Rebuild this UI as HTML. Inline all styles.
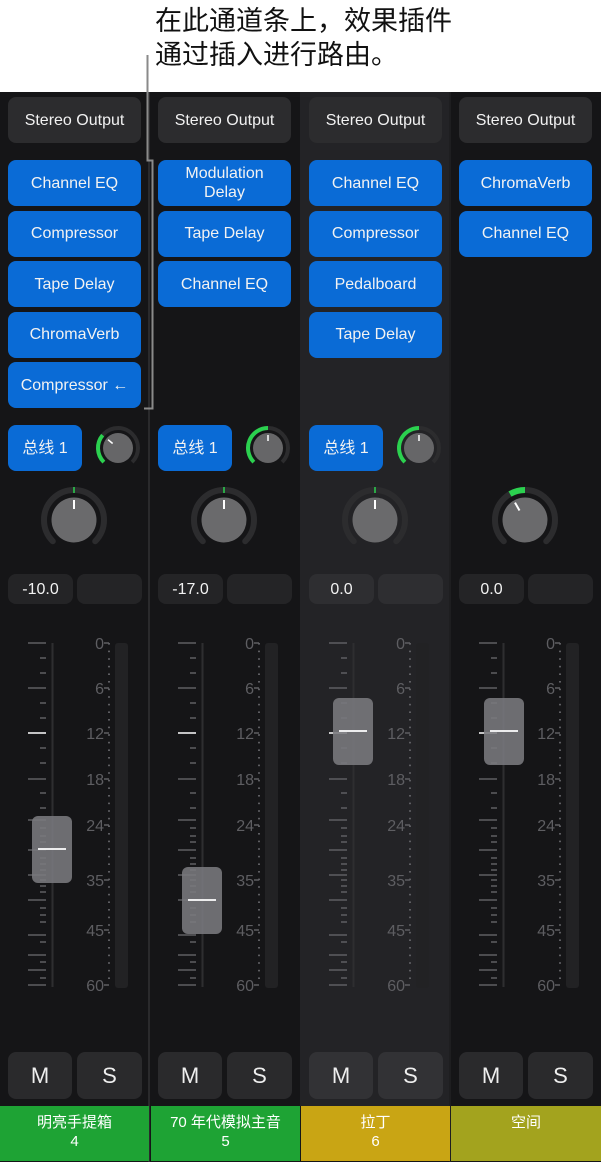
<!DOCTYPE html>
<html><head><meta charset="utf-8">
<style>
*{margin:0;padding:0;box-sizing:border-box}
body{width:601px;height:1162px;background:#fff;position:relative;overflow:hidden;font-family:"Liberation Sans","Noto Sans CJK SC",sans-serif}
.cap{position:absolute;left:155px;font-size:27px;color:#111;font-family:"Noto Sans CJK SC",sans-serif;line-height:33px;white-space:nowrap}
.panel{position:absolute;left:0;top:92px;width:601px;height:1070px;background:#151517}
.col{position:absolute;top:92px;height:1014px;width:150px}
.b{position:absolute;border-radius:8px;color:#f2f2f2;font-size:16px;display:flex;align-items:center;justify-content:center;text-align:center;line-height:19px}
.g{background:#2c2c2e}
.bl{background:#0a6bd6}
.foot{position:absolute;top:1106px;height:55px;color:#fff;font-size:15px;text-align:center;line-height:19px;padding-top:7px;font-family:"Liberation Sans","Noto Sans CJK SC",sans-serif}
.ms{font-size:22px;color:#eee}
.sep{position:absolute;width:2px;background:#2a2a2c}
</style></head><body>
<div class="cap" style="top:2px">在此通道条上，效果插件</div>
<div class="cap" style="top:36px">通过插入进行路由。</div>
<div class="panel"></div>
<div class="col" style="left:300px;width:150px;background:#232326"></div>
<div class="sep" style="left:148px;top:92px;height:1070px"></div>
<div class="sep" style="left:449px;top:92px;height:1070px;background:#1e1e20"></div>
<div id="root"></div>
<svg style="position:absolute;left:0;top:0" width="601" height="420">
<path d="M147.5 55V160.5H152.5V408.5H144" fill="none" stroke="#8a8a8a" stroke-width="2"/>
</svg>
<div class="foot" style="left:0;width:149px;background:#1ea334">明亮手提箱<br>4</div>
<div class="foot" style="left:151px;width:149px;background:#1ea334">70 年代模拟主音<br>5</div>
<div class="foot" style="left:301px;width:149px;background:#c9a514">拉丁<br>6</div>
<div class="foot" style="left:451px;width:150px;background:#a3a31e">空间</div>
<script>
var cols=[
 {x:0,pl:["Channel EQ","Compressor","Tape Delay","ChromaVerb","Compressor ←"],bus:1,sa:-50,val:"-10.0",fy:816,pan:0},
 {x:150,pl:["Modulation<br>Delay","Tape Delay","Channel EQ"],bus:1,sa:0,val:"-17.0",fy:867,pan:0},
 {x:301,pl:["Channel EQ","Compressor","Pedalboard","Tape Delay"],bus:1,sa:0,val:"0.0",fy:698,pan:0},
 {x:451,pl:["ChromaVerb","Channel EQ"],bus:0,val:"0.0",fy:698,pan:-30}
];
function pt(cx,cy,r,a){a=(a-90)*Math.PI/180;return [cx+r*Math.cos(a),cy+r*Math.sin(a)];}
function arc(cx,cy,r,a1,a2){var p=pt(cx,cy,r,a1),q=pt(cx,cy,r,a2);var l=(a2-a1)>180?1:0;return "M"+p[0].toFixed(2)+" "+p[1].toFixed(2)+"A"+r+" "+r+" 0 "+l+" 1 "+q[0].toFixed(2)+" "+q[1].toFixed(2);}
var h="";
var labs=[["0",643],["6",688],["12",733],["18",779],["24",825],["35",880],["45",930],["60",985]];
cols.forEach(function(c){
 var x=c.x;
 h+='<div class="b g" style="left:'+(x+8)+'px;top:97px;width:133px;height:46px">Stereo Output</div>';
 c.pl.forEach(function(p,i){h+='<div class="b bl" style="left:'+(x+8)+'px;top:'+(160+i*50.6)+'px;width:133px;height:46px;font-size:16px">'+p+'</div>';});
 var s='<svg style="position:absolute;left:'+x+'px;top:400px" width="150" height="600">';
 if(c.bus){
  h+='<div class="b bl" style="left:'+(x+8)+'px;top:425px;width:74px;height:46px;font-size:16px">总线 1</div>';
  var cx=118,cy=48;
  s+='<path d="'+arc(cx,cy,20,-135,135)+'" stroke="#2c2c2e" stroke-width="4" fill="none"/>';
  s+='<path d="'+arc(cx,cy,20,-135,c.sa)+'" stroke="#2bd14f" stroke-width="4" fill="none"/>';
  s+='<circle cx="'+cx+'" cy="'+cy+'" r="15" fill="#666668"/>';
  var a=pt(cx,cy,13,c.sa),b=pt(cx,cy,7,c.sa);
  s+='<line x1="'+a[0]+'" y1="'+a[1]+'" x2="'+b[0]+'" y2="'+b[1]+'" stroke="#fff" stroke-width="1.5"/>';
 }
 var kx=74,ky=120;
 s+='<path d="'+arc(kx,ky,30,-135,135)+'" stroke="#2c2c2e" stroke-width="6" fill="none" stroke-linecap="round"/>';
 if(c.pan<0) s+='<path d="'+arc(kx,ky,30,c.pan,0)+'" stroke="#2bd14f" stroke-width="6" fill="none"/>';
 else s+='<line x1="74" y1="87" x2="74" y2="93" stroke="#2bd14f" stroke-width="1.5"/>';
 s+='<circle cx="74" cy="120" r="22.5" fill="#6a6a6c"/>';
 var a=pt(kx,ky,20,c.pan),b=pt(kx,ky,11,c.pan);
 s+='<line x1="'+a[0]+'" y1="'+a[1]+'" x2="'+b[0]+'" y2="'+b[1]+'" stroke="#fff" stroke-width="2"/>';
 s+='<line x1="52.5" y1="243" x2="52.5" y2="587" stroke="#2e2e30" stroke-width="2"/>';
 s+='<rect x="115" y="243" width="13" height="345" rx="3" fill="#222224"/>';
 labs.forEach(function(l){
  s+='<text x="104" y="'+(l[1]-400+6)+'" fill="#5e5e62" font-size="16" text-anchor="end" font-family="Liberation Sans">'+l[0]+'</text>';
  s+='<line x1="104" y1="'+(l[1]-400)+'" x2="109" y2="'+(l[1]-400)+'" stroke="#5e5e62" stroke-width="1.5"/>';
 });
 for(var y=643;y<=985;y+=7.6){s+='<rect x="108" y="'+(y-400)+'" width="2" height="1.6" fill="#5e5e62"/>';}
 var maj=[643,688,733,779,820,850,875,900,935,955,970,985];
 maj.forEach(function(y){s+='<line x1="28" y1="'+(y-400)+'" x2="46" y2="'+(y-400)+'" stroke="'+(y==733?'#fff':'#5e5e62')+'" stroke-width="1.5"/>';});
 var mn=[658,673,703,718,748,763,793,808,828,836,842,858,864,870,880,886,892,908,915,922,942,962,978];
 mn.forEach(function(y){s+='<line x1="40" y1="'+(y-400)+'" x2="46" y2="'+(y-400)+'" stroke="#5e5e62" stroke-width="1.5"/>';});
 var fx=x==451?33:32;
 s+='<rect x="'+fx+'" y="'+(c.fy-400)+'" width="40" height="67" rx="6" fill="#7a7a7e" fill-opacity="0.88"/>';
 s+='<line x1="'+(fx+6)+'" y1="'+(c.fy-400+33)+'" x2="'+(fx+34)+'" y2="'+(c.fy-400+33)+'" stroke="#fff" stroke-width="1.8"/>';
 s+='</svg>';
 h+=s;
 h+='<div class="b g" style="left:'+(x+8)+'px;top:574px;width:65px;height:30px;font-size:16px;background:'+(x==301?'#2e2e31':'#242426')+'">'+c.val+'</div>';
 h+='<div class="b g" style="left:'+(x+77)+'px;top:574px;width:65px;height:30px;background:'+(x==301?'#2e2e31':'#242426')+'"></div>';
 h+='<div class="b g ms" style="left:'+(x+8)+'px;top:1052px;width:64px;height:47px;background:'+(x==301?'#323235':'#2a2a2c')+'">M</div>';
 h+='<div class="b g ms" style="left:'+(x+77)+'px;top:1052px;width:65px;height:47px;background:'+(x==301?'#323235':'#2a2a2c')+'">S</div>';
});
document.getElementById('root').innerHTML=h;
</script>
</body></html>
